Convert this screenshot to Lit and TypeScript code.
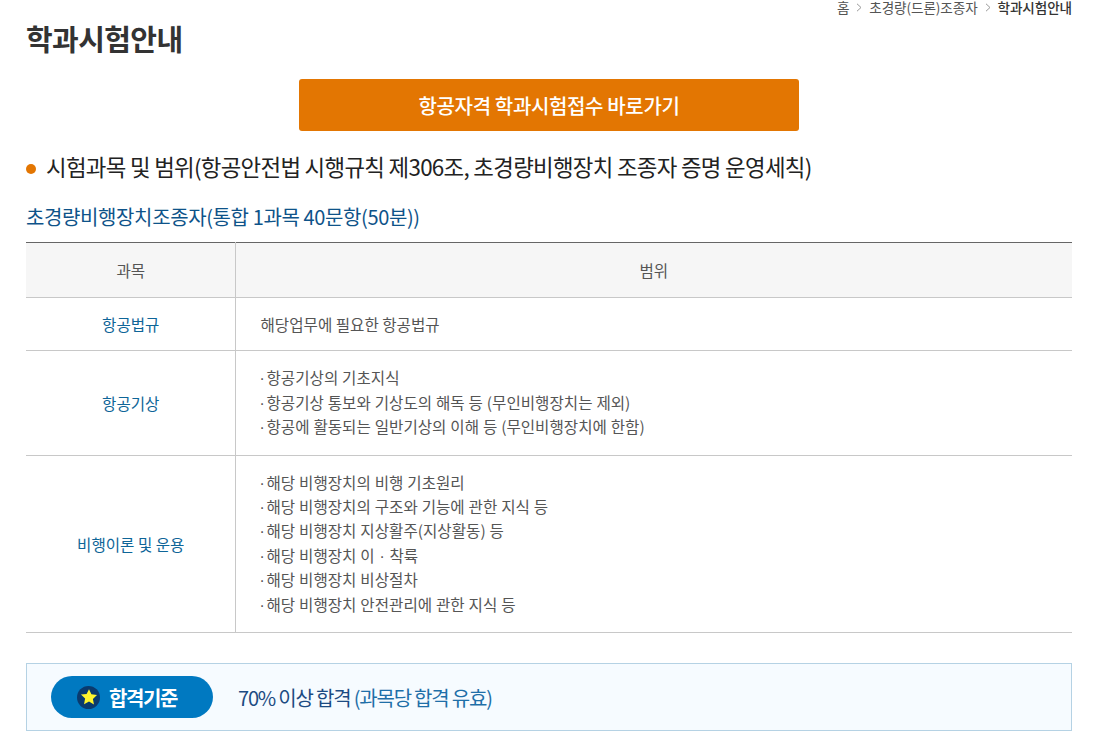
import { LitElement, html, css } from "lit";
import { customElement } from "lit/decorators.js";

const rows = [
  { subject: "항공법규", plain: true, items: ["해당업무에 필요한 항공법규"] },
  { subject: "항공기상", items: ["항공기상의 기초지식", "항공기상 통보와 기상도의 해독 등 (무인비행장치는 제외)", "항공에 활동되는 일반기상의 이해 등 (무인비행장치에 한함)"] },
  { subject: "비행이론 및 운용", items: ["해당 비행장치의 비행 기초원리", "해당 비행장치의 구조와 기능에 관한 지식 등", "해당 비행장치 지상활주(지상활동) 등", html`해당 비행장치 이<span class="mid"> · </span>착륙`, "해당 비행장치 비상절차", "해당 비행장치 안전관리에 관한 지식 등"] },
];

@customElement("app-root")
export class AppRoot extends LitElement {
  static styles = css`
    :host { display: block; width: 1095px; height: 755px; overflow: hidden; background: #fff; color: #444;
      font-family: "Noto Sans CJK KR", "Noto Sans", sans-serif; }
    .page { padding: 0 23px 0 26px; display: flex; flex-direction: column; }
    .crumbs { display: flex; justify-content: flex-end; align-items: center; height: 15px; font-size: 13.6px; line-height: 15px; color: #555; letter-spacing: -0.1px; }
    .crumbs svg { margin: 0 7px; }
    .crumbs b { font-weight: 500; color: #333; }
    h1 { margin: 5px 0 0; font-size: 29px; line-height: 36px; font-weight: 700; color: #333; letter-spacing: -0.6px; }
    .cta { align-self: center; margin-top: 23px; width: 500px; height: 52px; border-radius: 3px; background: #e37602; color: #fff;
      display: flex; align-items: center; justify-content: center; font-size: 20px; font-weight: 500; letter-spacing: -0.35px; text-decoration: none; }
    h2 { margin: 18px 0 0; display: flex; align-items: center; gap: 10px; font-size: 22.4px; line-height: 34px; font-weight: 400; color: #222; letter-spacing: -0.7px; }
    .dot { width: 10px; height: 10px; border-radius: 50%; background: #e37602; flex: none; margin-top: 5px; }
    h3 { margin: 19px 0 0; font-size: 20px; line-height: 30px; font-weight: 400; color: #0e5389; letter-spacing: -0.38px; }
    table { margin-top: 10px; width: 100%; border-collapse: collapse; table-layout: fixed; border-top: 1px solid #666; font-size: 15.6px; line-height: 24.4px; }
    col.c1 { width: 209px; }
    th { background: #f6f6f6; height: 54px; padding: 0; font-weight: 400; color: #555; border-bottom: 1px solid #c8c8c8; }
    td { border-bottom: 1px solid #c8c8c8; padding: 0; color: #555; }
    th:first-child, td:first-child { border-right: 1px solid #c8c8c8; text-align: center; padding-left: 1px; }
    td:first-child { color: #0e6598; }
    td.r { padding: 14px 0 16px 24px; word-spacing: 0.4px; }
    td.r.plain { padding: 14px 0 14px 25px; word-spacing: 0; }
    .d { display: inline-block; width: 7px; line-height: 0; font-family: "Liberation Sans", sans-serif; }
    .mid { line-height: 0; font-family: "Liberation Sans", sans-serif; }
    .basis { margin-top: 30px; height: 66px; border: 1px solid #b5d2e4; background: #f6fbff; display: flex; align-items: center; padding-left: 24px; gap: 25px; }
    .pill { width: 136px; padding-left: 26px; height: 42px; border-radius: 21px; background: #0079c1; display: flex; align-items: center; gap: 9px; color: #fff; font-size: 20px; font-weight: 700; letter-spacing: -1.4px; }
    .star { width: 23px; height: 23px; border-radius: 50%; background: #0a3a6d; display: flex; align-items: center; justify-content: center; }
    .txt { font-size: 20px; color: #1c4b82; letter-spacing: -1.2px; }
    .txt span { color: #1f6fa8; }
  `;

  render() {
    return html`<div class="page">
      <div class="crumbs">
        <span>홈</span>
        <svg width="6" height="9" viewBox="0 0 6 9"><path d="M1 .8 5 4.5 1 8.2" fill="none" stroke="#999"/></svg>
        <span>초경량(드론)조종자</span>
        <svg width="6" height="9" viewBox="0 0 6 9"><path d="M1 .8 5 4.5 1 8.2" fill="none" stroke="#999"/></svg>
        <b>학과시험안내</b>
      </div>
      <h1>학과시험안내</h1>
      <a class="cta">항공자격 학과시험접수 바로가기</a>
      <h2><i class="dot"></i>시험과목 및 범위(항공안전법 시행규칙 제306조, 초경량비행장치 조종자 증명 운영세칙)</h2>
      <h3>초경량비행장치조종자(통합 1과목 40문항(50분))</h3>
      <table>
        <colgroup><col class="c1" /><col /></colgroup>
        <thead><tr><th>과목</th><th>범위</th></tr></thead>
        <tbody>
          ${rows.map(r => html`<tr>
            <td>${r.subject}</td>
            <td class="r ${r.plain ? "plain" : ""}">${r.items.map(i => html`<div>${r.plain ? "" : html`<span class="d">·</span>`}${i}</div>`)}</td>
          </tr>`)}
        </tbody>
      </table>
      <div class="basis">
        <div class="pill">
          <span class="star"><svg width="18" height="18" viewBox="0 0 24 24"><path d="M12 1.5l3.2 6.9 7.5.9-5.5 5.2 1.4 7.5L12 18l-6.6 3.5 1.4-7.5-5.5-5.2 7.5-.9z" fill="#fff52e"/></svg></span>
          합격기준
        </div>
        <div class="txt">70% 이상 합격 <span>(과목당 합격 유효)</span></div>
      </div>
    </div>`;
  }
}
